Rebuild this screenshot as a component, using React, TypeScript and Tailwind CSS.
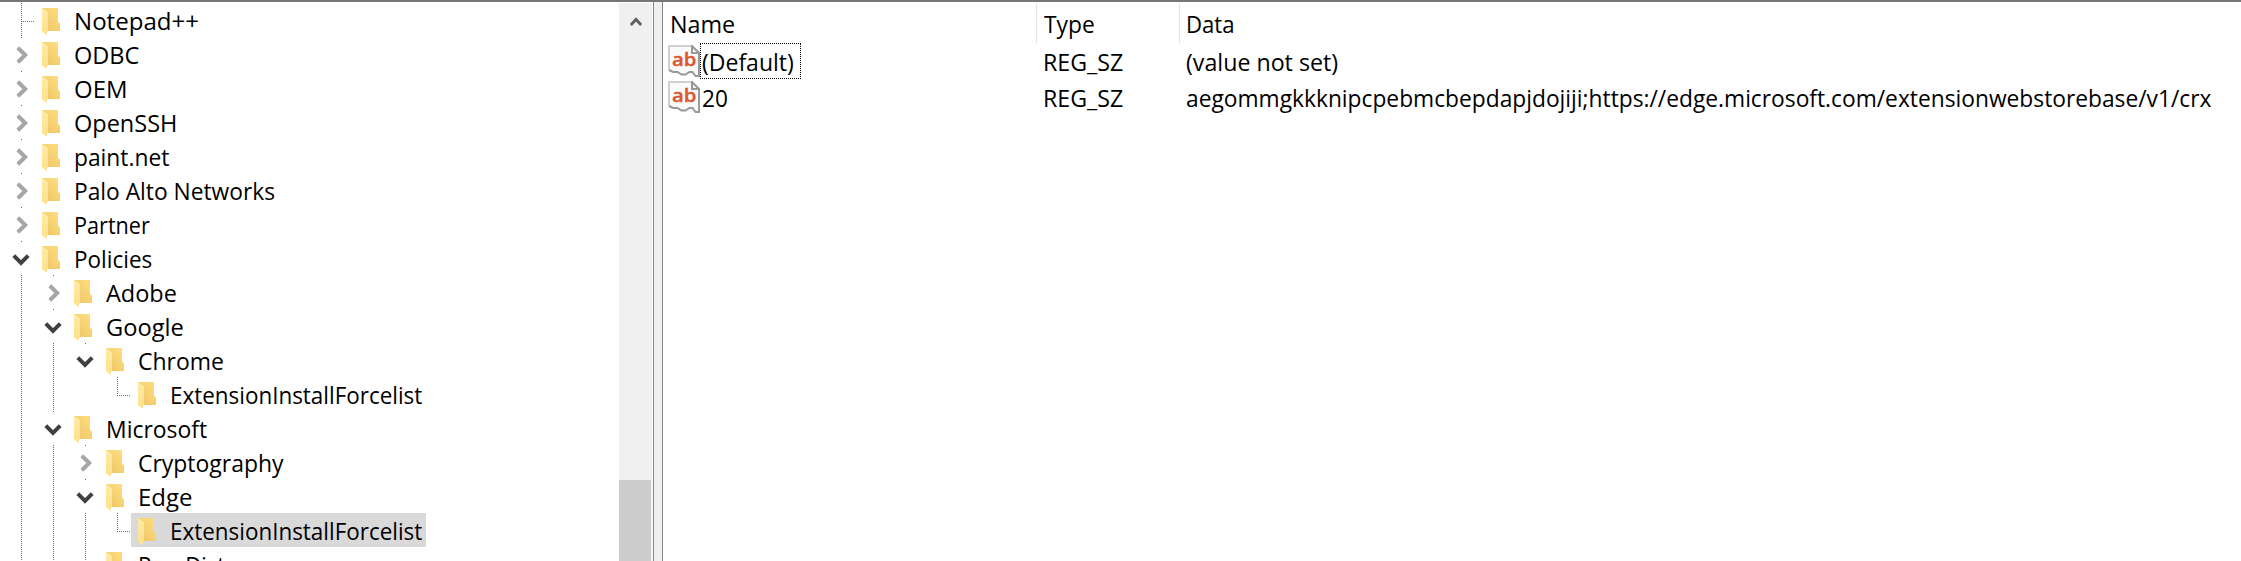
import { useLayoutEffect, useRef } from "react";

type Node = { label: string; width: number; guides: boolean[]; state: "closed" | "open" | "leaf"; last?: boolean; selected?: boolean };

const nodes: Node[] = [
  { label: "Notepad++", width: 125, guides: [], state: "leaf" },
  { label: "ODBC", width: 65, guides: [], state: "closed" },
  { label: "OEM", width: 53, guides: [], state: "closed" },
  { label: "OpenSSH", width: 103, guides: [], state: "closed" },
  { label: "paint.net", width: 95, guides: [], state: "closed" },
  { label: "Palo Alto Networks", width: 201.5, guides: [], state: "closed" },
  { label: "Partner", width: 75.5, guides: [], state: "closed" },
  { label: "Policies", width: 78.5, guides: [], state: "open" },
  { label: "Adobe", width: 71, guides: [true], state: "closed" },
  { label: "Google", width: 77.5, guides: [true], state: "open" },
  { label: "Chrome", width: 86, guides: [true, true], state: "open" },
  { label: "ExtensionInstallForcelist", width: 252, guides: [true, true, false], state: "leaf", last: true },
  { label: "Microsoft", width: 101.5, guides: [true], state: "open" },
  { label: "Cryptography", width: 145.5, guides: [true, true], state: "closed" },
  { label: "Edge", width: 54, guides: [true, true], state: "open" },
  { label: "ExtensionInstallForcelist", width: 252, guides: [true, true, true], state: "leaf", last: true, selected: true },
  { label: "PeerDist", width: 87.5, guides: [true, true], state: "leaf" },
];

const values = [
  { name: "(Default)", nameWidth: 92, type: "REG_SZ", data: "(value not set)", dataWidth: 152, focused: true },
  { name: "20", nameWidth: 26, type: "REG_SZ", data: "aegommgkkknipcpebmcbepdapjdojiji;https://edge.microsoft.com/extensionwebstorebase/v1/crx", dataWidth: 1025, focused: false },
];

function Label({ text, width }: { text: string; width: number }) {
  const ref = useRef<HTMLSpanElement>(null);
  useLayoutEffect(() => {
    const el = ref.current;
    if (el) el.style.transform = `scaleX(${width / el.offsetWidth})`;
  }, [text, width]);
  return (
    <span className="block shrink-0 pt-px" style={{ width }}>
      <span ref={ref} className="inline-block origin-left whitespace-nowrap">{text}</span>
    </span>
  );
}

const vDots = "w-px bg-[repeating-linear-gradient(to_bottom,#6e6e6e_0_1px,transparent_1px_2px)]";

function Guide({ on }: { on: boolean }) {
  return <div className="h-[34px] w-8 shrink-0 pl-[18px]">{on && <div className={`h-full ${vDots}`} />}</div>;
}

function Branch({ state, last }: { state: Node["state"]; last?: boolean }) {
  if (state === "leaf") {
    return (
      <div className="flex h-[34px] w-8 shrink-0 pl-[18px]">
        <div className={`${last ? "h-[19px]" : "h-full"} ${vDots}`} />
        <div className="mt-[18px] h-px flex-1 bg-[repeating-linear-gradient(to_right,transparent_0_1px,#6e6e6e_1px_2px)]" />
      </div>
    );
  }
  return (
    <svg className="h-[34px] w-8 shrink-0" viewBox="0 0 32 34" fill="none">
      <rect x="18" y="0" width="1" height="1" fill="#6e6e6e" />
      {state === "closed" ? (
        <path d="M14.800 10.800 22.200 18l-7.400 7.200" stroke="#a6a6a6" strokeWidth="4" />
      ) : (
        <path d="M10.800 14.600 18 21.800l7.200-7.200" stroke="#404040" strokeWidth="4" />
      )}
    </svg>
  );
}

function Folder() {
  return (
    <svg className="mt-[5px] h-[27px] w-[19px] shrink-0" viewBox="0 0 19 27">
      <defs>
        <linearGradient id="folderBack" x1="0" y1="1" x2="1" y2="0">
          <stop offset="0" stopColor="#ebc463" />
          <stop offset="1" stopColor="#ffdf83" />
        </linearGradient>
        <linearGradient id="folderFront" x1="0" y1="0" x2="0" y2="1">
          <stop offset="0" stopColor="#ffeaa6" />
          <stop offset="1" stopColor="#ffe08a" />
        </linearGradient>
      </defs>
      <path d="M0 0h16v14l2 1v8H4z" fill="url(#folderBack)" />
      <path d="M0 0l6 4v18.500H5V27L0 23.200z" fill="url(#folderFront)" />
    </svg>
  );
}

function StringIcon() {
  return (
    <svg className="h-8 w-8 shrink-0" viewBox="0 0 32 32" fill="none">
      <path d="M1 1h23l7 7v22.500h-3l-3-4h-3l-4 2.500h-5l-3-2.500H5l-4-2z" fill="#fafafa" />
      <path d="M1 25V1h23" stroke="#d0d0d0" strokeWidth="2" />
      <path d="M24 0v8h7M24 1l7 7v23h-3.500l-3-4h-3l-4 2.500h-4l-4-2.500H5l-4-2" stroke="#999" strokeWidth="2" />
      <text x="4" y="21.300" fontFamily="Open Sans, sans-serif" fontSize="18.500" fontWeight="600" fill="#dc5430" stroke="#dc5430" strokeWidth=".3" textLength="24.500" lengthAdjust="spacingAndGlyphs">ab</text>
    </svg>
  );
}

export default function App() {
  return (
    <div className="flex h-[561px] w-[2241px] flex-col overflow-hidden bg-white font-['Open_Sans',sans-serif] text-[23.5px] leading-[34px] text-black">
      <div className="h-0.5 shrink-0 bg-[#767678]" />
      <div className="flex min-h-0 flex-1">
        <div className="flex w-[653px] shrink-0 overflow-hidden pt-px">
          <div className="flex-1 pl-[3px]">
            {nodes.map((n, i) => (
              <div key={i} className="flex h-[34px]">
                {n.guides.map((g, j) => <Guide key={j} on={g} />)}
                <Branch state={n.state} last={n.last} />
                <div className={`flex h-[34px] pl-[7px] pr-1 ${n.selected ? "bg-[#d9d9d9]" : ""}`}>
                  <Folder />
                  <div className="ml-[13px]"><Label text={n.label} width={n.width} /></div>
                </div>
              </div>
            ))}
          </div>
          <div className="mr-px flex w-[33px] flex-col bg-[#f0f0f0]">
            <svg className="mt-3.5 ml-[11px] h-3 w-3" viewBox="0 0 12 12" fill="none">
              <path d="M.8 8 6 2.500 11.200 8" stroke="#606060" strokeWidth="3" />
            </svg>
            <div className="mt-[451px] w-8 flex-1 bg-[#cdcdcd]" />
          </div>
        </div>
        <div className="w-2.5 shrink-0 border-x border-[#828790] bg-[#f0f0f0]" />
        <div className="flex-1 pt-px">
          <div className="flex h-10">
            <div className="w-[374px] border-r border-[#e5e5e5] pt-[3px] pl-[7px]"><Label text="Name" width={65.5} /></div>
            <div className="w-[143px] border-r border-[#e5e5e5] pt-[3px] pl-[7px]"><Label text="Type" width={50.5} /></div>
            <div className="pt-[3px] pl-1.5"><Label text="Data" width={49} /></div>
          </div>
          {values.map((v) => (
            <div key={v.name} className="flex h-9">
              <div className="flex w-[373px] pl-[5px]">
                <div className="pt-0.5"><StringIcon /></div>
                <div className={`h-9 border pl-px ${v.focused ? "w-[101px] border-dotted border-black" : "border-transparent"}`}>
                  <Label text={v.name} width={v.nameWidth} />
                </div>
              </div>
              <div className="w-[143px] pt-px pl-[7px]"><Label text={v.type} width={80} /></div>
              <div className="pt-px pl-[7px]"><Label text={v.data} width={v.dataWidth} /></div>
            </div>
          ))}
        </div>
      </div>
    </div>
  );
}
